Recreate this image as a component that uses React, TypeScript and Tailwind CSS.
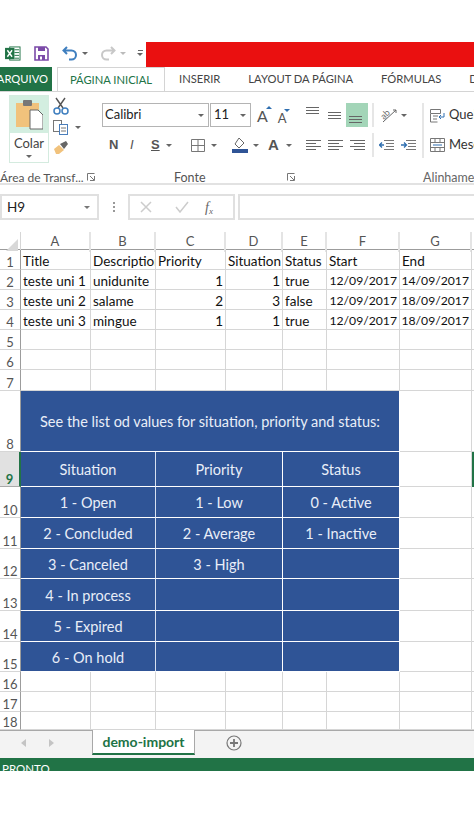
import type { ReactNode } from "react";

const COLS = "grid grid-cols-[21px_70px_65px_70px_57px_44px_73px_72px_2px]";
const CELL = "min-w-0 overflow-hidden whitespace-nowrap border-r border-b border-[#d6d6d6] px-[2px]";
const BLUE = "flex items-center justify-center border-b border-r border-white bg-[#2f5496] text-[14.5px] text-[#e9eef8]";

function Caret({ className = "" }: { className?: string }) {
  return <span className={`inline-block h-0 w-0 border-x-[3px] border-t-[3px] border-x-transparent border-t-[#666] ${className}`} />;
}

function Lines({ widths, className = "" }: { widths: number[]; className?: string }) {
  return (
    <svg width="16" height={widths.length * 3 + 1} className={className}>
      {widths.map((w, i) => (
        <rect key={i} x={0} y={i * 3} width={w} height="1" fill="#666" />
      ))}
    </svg>
  );
}

function Launcher() {
  return (
    <svg width="8" height="8" viewBox="0 0 8 8">
      <path d="M.5 7.500V.5h7M7.500 3v4.500H3M3 3l4 4" fill="none" stroke="#777" />
    </svg>
  );
}

function RowHead({ children, active }: { children?: ReactNode; active?: boolean }) {
  return (
    <div
      className={
        active
          ? "flex items-end justify-center border-r-2 border-b border-r-[#217346] border-b-[#aaa] bg-[#e1e1e1] text-[13px] leading-[13px] font-bold text-[#217346]"
          : "flex items-end justify-center border-r border-b border-r-[#9c9c9c] border-b-[#d6d6d6] text-[13px] leading-[13px] text-[#555]"
      }
    >
      {children}
    </div>
  );
}

function DataRow({ n, cells, h }: { n: number; cells?: string[]; h: string }) {
  return (
    <div className={`${COLS} ${h}`}>
      <RowHead>{n}</RowHead>
      {Array.from({ length: 7 }).map((_, i) => {
        const isDate = i >= 5 && n > 1;
        return (
          <div
            key={i}
            className={`${CELL} flex items-start pt-[3px] leading-[16px] text-[#111] ${isDate ? "text-[12.2px]" : "text-[13.5px]"} ${(i === 2 || i === 3 || isDate) && n > 1 ? "justify-end" : ""}`}
          >
            {cells?.[i]}
          </div>
        );
      })}
      <div className="border-b border-[#d6d6d6]" />
    </div>
  );
}

function BlueRow({ n, a, b, c, h, active }: { n: number; a: string; b?: string; c?: string; h: string; active?: boolean }) {
  return (
    <div className={`${COLS} ${h}`}>
      <RowHead active={active}>{n}</RowHead>
      <div className={`col-span-2 pt-[2px] ${BLUE} border-r-[#d7e0f0]`}>{a}</div>
      <div className={`col-span-2 pt-[2px] ${BLUE}`}>{b}</div>
      <div className={`col-span-2 pt-[2px] ${BLUE}`}>{c}</div>
      <div className="border-r border-b border-[#d6d6d6]" />
      <div className={active ? "border-y-2 border-l-2 border-[#217346]" : "border-b border-[#d6d6d6]"} />
    </div>
  );
}

function Divider({ className = "" }: { className?: string }) {
  return <div className={`w-[2px] bg-[#e6e6e6] ${className}`} />;
}

export default function App() {
  return (
    <div className="h-[813px] w-[474px] overflow-hidden bg-white font-['Lato',sans-serif] text-[#444]">
      {/* quick access */}
      <div className="flex h-[67px] items-end">
        <div className="flex h-[25px] w-[146px] items-center pb-[3px] pl-[5px]">
          <svg width="16" height="15" viewBox="0 0 17 16">
            <rect x="5" y="1" width="11" height="14" fill="#fff" stroke="#217346" />
            <path d="M10 4h5M10 7h5M10 10h5M10 13h5" stroke="#217346" />
            <rect x="0" y="2" width="10" height="12" fill="#217346" />
            <path d="M2.500 4.500l5 7M7.500 4.500l-5 7" stroke="#fff" strokeWidth="1.500" />
          </svg>
          <svg width="15" height="15" viewBox="0 0 15 15" className="ml-[13px]">
            <path d="M1 1h11l2 2v11H1z" fill="#fff" stroke="#7b4aa8" strokeWidth="1.600" />
            <rect x="4" y="1" width="7" height="4" fill="#7b4aa8" />
            <rect x="4" y="9" width="7" height="5" fill="#7b4aa8" />
            <rect x="6" y="10.500" width="2" height="3" fill="#fff" />
          </svg>
          <svg width="16" height="15" viewBox="0 0 16 15" className="ml-[13px]">
            <path d="M5 1L1.500 4.500 5 8M2 4.500h7.500a4.500 4.500 0 0 1 0 9H7" fill="none" stroke="#3f7fbf" strokeWidth="2" />
          </svg>
          <Caret className="ml-[4px]" />
          <svg width="16" height="15" viewBox="0 0 16 15" className="ml-[12px]">
            <path d="M11 1l3.500 3.500L11 8M14 4.500H6.500a4.500 4.500 0 0 0 0 9H9" fill="none" stroke="#c8c8c8" strokeWidth="2" />
          </svg>
          <Caret className="ml-[4px] border-t-[#bbb]" />
          <span className="ml-[11px] flex flex-col items-center gap-[2px]">
            <span className="h-px w-[5px] bg-[#666]" />
            <Caret />
          </span>
        </div>
        <div className="h-[25px] flex-1 bg-[#ea1010]" />
      </div>

      {/* tabs */}
      <div className="flex h-[25px] items-stretch overflow-hidden whitespace-nowrap border-b border-[#d4d4d4] text-[11.2px] text-[#444]">
        <div className="flex w-[52px] shrink-0 items-center justify-end bg-[#217346] pr-[4px] text-white">ARQUIVO</div>
        <div className="-mb-px ml-[5px] flex w-[108px] shrink-0 items-center justify-center border-x border-t border-[#d4d4d4] bg-white text-[#217346]">PÁGINA INICIAL</div>
        <div className="ml-[14px] shrink-0 self-center">INSERIR</div>
        <div className="ml-[28px] shrink-0 self-center">LAYOUT DA PÁGINA</div>
        <div className="ml-[28px] shrink-0 self-center">FÓRMULAS</div>
        <div className="ml-[28px] shrink-0 self-center">DADOS</div>
      </div>

      {/* ribbon */}
      <div className="flex h-[93px] overflow-hidden border-b-2 border-[#e2e2e2] pt-[3px] text-[12px]">
        <div className="relative flex w-[98px] shrink-0 pl-[9px]">
          <div className="h-[68px] w-[40px] border border-[#d4ebdf]">
            <div className="flex h-[37px] items-center justify-center bg-[#d3eee0]">
              <svg width="28" height="31" viewBox="0 0 28 31">
                <rect x="1" y="4" width="23" height="24" fill="#f1c27c" />
                <rect x="8" y="1" width="9" height="6" rx="1" fill="#777" />
                <path d="M15 11h8l5 5v14H15z" fill="#fff" stroke="#666" />
              </svg>
            </div>
            <div className="flex flex-col items-center pt-[1px] text-[13px] leading-[18px]">
              Colar
              <Caret className="mt-[3px] border-t-[#333]" />
            </div>
          </div>
          <div className="ml-[4px] flex flex-col gap-[5px] pt-[2px]">
            <svg width="16" height="18" viewBox="0 0 16 18">
              <path d="M3 1l7 10M12 1L5 11" stroke="#555" strokeWidth="1.400" />
              <circle cx="4" cy="14" r="3" fill="none" stroke="#3f7fbf" strokeWidth="1.500" />
              <circle cx="12" cy="14" r="3" fill="none" stroke="#3f7fbf" strokeWidth="1.500" />
            </svg>
            <div className="flex items-center">
              <svg width="16" height="15" viewBox="0 0 16 15">
                <rect x=".5" y=".5" width="8" height="11" fill="#fff" stroke="#777" />
                <rect x="6.500" y="4.500" width="8" height="10" fill="#fff" stroke="#4a7ebb" />
                <path d="M8 8h5M8 11h5" stroke="#777" />
              </svg>
              <Caret className="ml-[6px]" />
            </div>
            <svg width="16" height="15" viewBox="0 0 16 15">
              <path d="M1 9l5-4 5 5-5 4H3z" fill="#f1c27c" />
              <path d="M7 4l6-3 2 3-4 5z" fill="#666" />
            </svg>
          </div>
          <span className="absolute left-0 top-[74px] whitespace-nowrap text-[12px] text-[#555]">Área de Transf...</span>
          <span className="absolute left-[87px] top-[78px] flex"><Launcher /></span>
        </div>
        <Divider className="mt-[2px] h-[83px]" />

        <div className="relative ml-[4px] h-[88px] w-[194px] shrink-0">
          <div className="mt-[8px] flex h-[24px] gap-[1px] text-[#222]">
            <div className="flex w-[107px] items-center justify-between border border-[#b4b4b4] pl-[2px] pr-[4px] text-[13px]">
              Calibri <Caret />
            </div>
            <div className="flex w-[41px] items-center justify-between border border-[#b4b4b4] pl-[3px] pr-[4px] text-[13px]">
              11 <Caret />
            </div>
            <div className="relative ml-[5px] text-[16px] leading-[26px] text-[#555]">
              A
              <span className="absolute -right-[4px] top-[3px] h-0 w-0 border-x-[3px] border-b-[3px] border-x-transparent border-b-[#2f6fb0]" />
            </div>
            <div className="relative ml-[9px] mt-[3px] text-[13px] leading-[24px] text-[#555]">
              A
              <span className="absolute -right-[3px] top-[3px] h-0 w-0 border-x-[3px] border-t-[3px] border-x-transparent border-t-[#2f6fb0]" />
            </div>
          </div>
          <div className="mt-[6px] flex h-[24px] items-center font-['Liberation_Sans',sans-serif] text-[#555]">
            <b className="ml-[7px] w-[21px] text-[13px]">N</b>
            <i className="w-[21px] text-[13px]">I</i>
            <span className="w-[15px] text-[13px] font-bold underline">S</span>
            <Caret />
            <svg width="14" height="13" viewBox="0 0 14 13" className="ml-[19px]">
              <path d="M.5.500h13v12H.500zM7 .500v12M.5 6.500h13" fill="none" stroke="#777" />
            </svg>
            <Caret className="ml-[6px]" />
            <svg width="16" height="16" viewBox="0 0 16 16" className="ml-[15px]">
              <path d="M7 1l5 5-5 5-4-4z" fill="#fff" stroke="#666" />
              <rect y="12" width="16" height="4" fill="#2f5496" />
            </svg>
            <Caret className="ml-[5px]" />
            <span className="ml-[9px] text-[15px] font-bold">A</span>
            <Caret className="ml-[7px]" />
          </div>
          <span className="absolute left-[72px] top-[74px] text-[12.5px] text-[#555]">Fonte</span>
          <span className="absolute left-[185px] top-[78px] flex"><Launcher /></span>
        </div>
        <Divider className="mt-[2px] h-[83px]" />

        <div className="relative ml-[7px] h-[88px] flex-1">
          <div className="mt-[8px] flex h-[24px] items-stretch">
            <div className="flex w-[22px] items-start justify-center pt-[4px]"><Lines widths={[13, 13, 13]} className="h-[7px]" /></div>
            <div className="flex w-[21px] items-center justify-center"><Lines widths={[13, 13, 13]} className="h-[7px]" /></div>
            <div className="flex w-[22px] items-end justify-center bg-[#a3d5b8] pb-[4px]"><Lines widths={[13, 13, 13]} className="h-[7px]" /></div>
            <Divider className="ml-[4px]" />
            <div className="ml-[6px] flex w-[28px] items-center gap-[3px]">
              <svg width="18" height="18" viewBox="0 0 18 18">
                <text x="1" y="11" fontSize="9" fill="#666" transform="rotate(-45 6 9)">ab</text>
                <path d="M3 16L16 4M16 4h-3M16 4v3" fill="none" stroke="#666" />
              </svg>
              <Caret />
            </div>
            <Divider className="ml-[14px] h-[55px]" />
            <div className="ml-[6px] flex items-center gap-[4px] text-[13px] text-[#333]">
              <svg width="15" height="15" viewBox="0 0 15 15" className="shrink-0">
                <path d="M.5 1.500h10v4H.500zM.5 6v8h7M3 8h5M3 11h4" fill="none" stroke="#777" />
                <path d="M14 5v4H9m2-2L9 9l2 2" fill="none" stroke="#2f6fb0" />
              </svg>
              Quebrar
            </div>
          </div>
          <div className="mt-[6px] flex h-[24px] items-stretch">
            <div className="flex w-[22px] items-center justify-center"><Lines widths={[15, 10, 15, 10]} className="h-[11px]" /></div>
            <div className="flex w-[21px] items-center justify-center"><Lines widths={[15, 11, 15, 11]} className="h-[11px]" /></div>
            <div className="flex w-[22px] items-center justify-center"><Lines widths={[15, 11, 15, 11]} className="h-[11px] scale-x-[-1]" /></div>
            <Divider className="ml-[4px]" />
            <div className="ml-[5px] flex items-center gap-[4px]">
              <svg width="15" height="11" viewBox="0 0 15 11">
                <path d="M5 .500h10M7 3.500h8M7 6.500h8M5 9.500h10" stroke="#777" />
                <path d="M5 5H.5M3 2.500L.5 5 3 7.500" fill="none" stroke="#2f6fb0" strokeWidth="1.300" />
              </svg>
              <svg width="15" height="11" viewBox="0 0 15 11" className="ml-[3px]">
                <path d="M5 .500h10M7 3.500h8M7 6.500h8M5 9.500h10" stroke="#777" />
                <path d="M0 5h5M3 2.500L5.500 5 3 7.500" fill="none" stroke="#2f6fb0" strokeWidth="1.300" />
              </svg>
            </div>
            <div className="ml-[14px] flex items-center gap-[4px] text-[13px] text-[#333]">
              <svg width="15" height="14" viewBox="0 0 15 14" className="shrink-0">
                <path d="M.5.500h14v13H.500zM.5 4.500h14M.5 9.500h14M5 .500v4M10 .500v4M5 9.500v4M10 9.500v4" fill="none" stroke="#777" />
                <path d="M3 7h9" stroke="#2f6fb0" />
              </svg>
              Mesclar
            </div>
          </div>
          <span className="absolute left-[120px] top-[74px] whitespace-nowrap text-[12.5px] text-[#666]">Alinhamento</span>
        </div>
      </div>

      {/* formula bar */}
      <div className="mt-[9px] flex h-[26px] items-stretch">
        <div className="flex w-[99px] items-center justify-between border-2 border-[#e0e0e0] pl-[5px] pr-[7px] text-[13.5px] text-[#222]">
          H9 <Caret className="border-t-[#777]" />
        </div>
        <div className="flex w-[29px] flex-col items-center justify-center gap-[2px]">
          <span className="h-[2px] w-[2px] bg-[#999]" />
          <span className="h-[2px] w-[2px] bg-[#999]" />
          <span className="h-[2px] w-[2px] bg-[#999]" />
        </div>
        <div className="flex w-[107px] items-center border-2 border-[#e0e0e0]">
          <svg width="12" height="12" viewBox="0 0 12 12" className="ml-[10px]">
            <path d="M1 1l10 10M11 1L1 11" stroke="#ccc" strokeWidth="1.500" />
          </svg>
          <svg width="14" height="12" viewBox="0 0 14 12" className="ml-[23px]">
            <path d="M1 6l4 5 8-10" fill="none" stroke="#ccc" strokeWidth="1.500" />
          </svg>
          <i className="ml-[16px] font-['Liberation_Serif',serif] text-[14px] text-[#666]">f<sub className="text-[9px]">x</sub></i>
        </div>
        <div className="ml-[3px] flex-1 border-y-2 border-l-2 border-[#e0e0e0]" />
      </div>

      {/* sheet */}
      <div className="mt-[11px]">
        <div className={`${COLS} h-[19px] border-b border-[#9c9c9c] pt-px text-center text-[13px] text-[#555]`}>
          <div className="flex items-end justify-end border-r border-[#d6d6d6] pr-[2px] pb-[1px]">
            <span className="h-0 w-0 border-b-[12px] border-l-[12px] border-b-[#d8d8d8] border-l-transparent" />
          </div>
          {["A", "B", "C", "D", "E", "F", "G"].map((c) => (
            <div key={c} className="border-r-2 border-[#e4e4e4]">{c}</div>
          ))}
          <div />
        </div>
        <DataRow n={1} h="h-[20px]" cells={["Title", "Description", "Priority", "Situation", "Status", "Start", "End"]} />
        <DataRow n={2} h="h-[20px]" cells={["teste uni 1", "unidunite", "1", "1", "true", "12/09/2017", "14/09/2017"]} />
        <DataRow n={3} h="h-[20px]" cells={["teste uni 2", "salame", "2", "3", "false", "12/09/2017", "18/09/2017"]} />
        <DataRow n={4} h="h-[20px]" cells={["teste uni 3", "mingue", "1", "1", "true", "12/09/2017", "18/09/2017"]} />
        <DataRow n={5} h="h-[20px]" />
        <DataRow n={6} h="h-[20px]" />
        <DataRow n={7} h="h-[21px]" />
        <div className={`${COLS} h-[61px]`}>
          <RowHead>8</RowHead>
          <div className={`col-span-6 pt-[2px] ${BLUE}`}>See the list od values for situation, priority and status:</div>
          <div className="border-r border-b border-[#d6d6d6]" />
          <div className="border-b border-[#d6d6d6]" />
        </div>
        <BlueRow n={9} h="h-[35px]" active a="Situation" b="Priority" c="Status" />
        <BlueRow n={10} h="h-[31px]" a="1 - Open" b="1 - Low" c="0 - Active" />
        <BlueRow n={11} h="h-[31px]" a="2 - Concluded" b="2 - Average" c="1 - Inactive" />
        <BlueRow n={12} h="h-[30px]" a="3 - Canceled" b="3 - High" />
        <BlueRow n={13} h="h-[32px]" a="4 - In process" />
        <BlueRow n={14} h="h-[31px]" a="5 - Expired" />
        <BlueRow n={15} h="h-[30px]" a="6 - On hold" />
        <DataRow n={16} h="h-[20px]" />
        <DataRow n={17} h="h-[20px]" />
        <DataRow n={18} h="h-[18px]" />
      </div>

      {/* sheet tabs */}
      <div className="flex h-[28px] border-t border-[#a8a8a8] bg-[#f3f3f3]">
        <div className="flex w-[92px] items-center pb-[4px] pl-[21px]">
          <span className="h-0 w-0 border-y-[4px] border-r-[5px] border-y-transparent border-r-[#c4c4c4]" />
          <span className="ml-[23px] h-0 w-0 border-y-[4px] border-l-[5px] border-y-transparent border-l-[#c4c4c4]" />
        </div>
        <div className="-mt-px flex h-[25px] w-[103px] items-center justify-center border-x border-b-2 border-x-[#a8a8a8] border-b-[#217346] bg-white text-[14px] font-bold text-[#217346]">
          demo-import
        </div>
        <div className="ml-[31px] mt-[4px]">
          <svg width="16" height="16" viewBox="0 0 16 16">
            <circle cx="8" cy="8" r="7" fill="none" stroke="#777" strokeWidth="1.200" />
            <path d="M8 4v8M4 8h8" stroke="#777" strokeWidth="1.800" />
          </svg>
        </div>
      </div>

      {/* status bar */}
      <div className="h-[13px] overflow-hidden bg-[#217346] pl-[2px] pt-[4px] text-[11.5px] leading-[14px] text-white">PRONTO</div>
    </div>
  );
}
